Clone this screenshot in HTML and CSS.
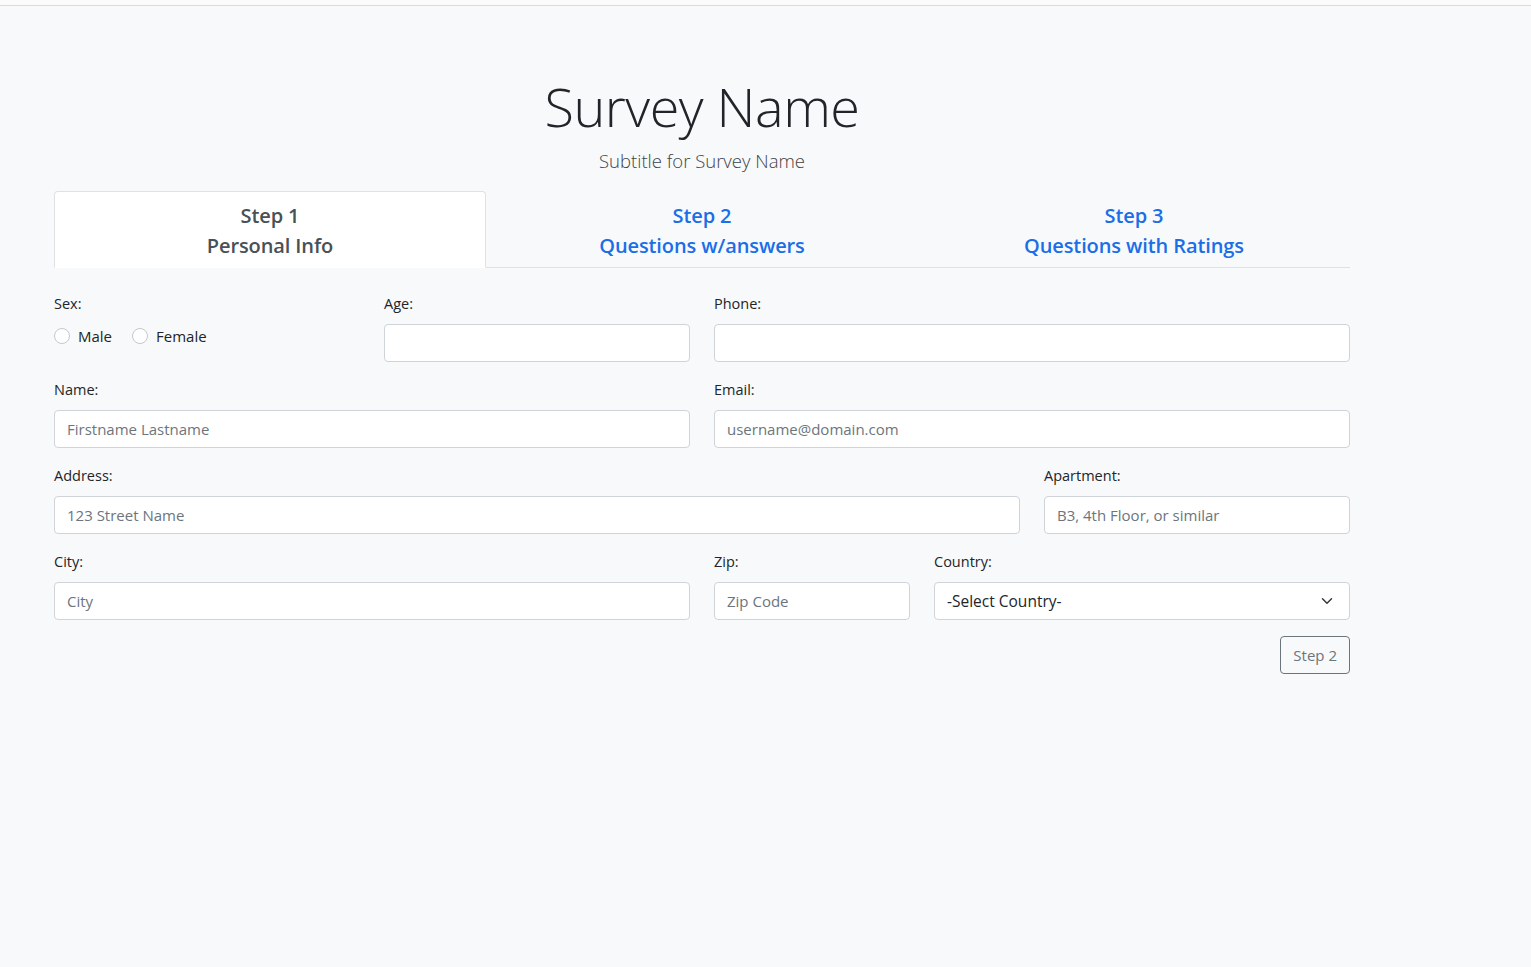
FILE: index.html
```html
<!DOCTYPE html>
<html lang="en">
<head>
<meta charset="utf-8">
<title>Survey Name</title>
<link rel="stylesheet" href="styles.css">
</head>
<body>
<div class="topbar"></div>
<main class="container">
  <header class="hero">
    <h1 class="title">Survey Name</h1>
    <p class="subtitle">Subtitle for Survey Name</p>
  </header>
  <nav class="tabs">
    <a class="tab active"><span>Step 1</span><span>Personal Info</span></a>
    <a class="tab"><span>Step 2</span><span>Questions w/answers</span></a>
    <a class="tab"><span>Step 3</span><span>Questions with Ratings</span></a>
  </nav>
  <form class="form">
    <div class="row">
      <div class="field c3">
        <label class="lbl">Sex:</label>
        <div class="radios">
          <label class="radio"><span class="dot"></span>Male</label>
          <label class="radio"><span class="dot"></span>Female</label>
        </div>
      </div>
      <div class="field c3">
        <label class="lbl">Age:</label>
        <input class="input" type="text">
      </div>
      <div class="field c6">
        <label class="lbl">Phone:</label>
        <input class="input" type="text">
      </div>
    </div>
    <div class="row">
      <div class="field c6">
        <label class="lbl">Name:</label>
        <input class="input" type="text" placeholder="Firstname Lastname">
      </div>
      <div class="field c6">
        <label class="lbl">Email:</label>
        <input class="input" type="text" placeholder="username@domain.com">
      </div>
    </div>
    <div class="row">
      <div class="field c9">
        <label class="lbl">Address:</label>
        <input class="input" type="text" placeholder="123 Street Name">
      </div>
      <div class="field c3">
        <label class="lbl">Apartment:</label>
        <input class="input" type="text" placeholder="B3, 4th Floor, or similar">
      </div>
    </div>
    <div class="row">
      <div class="field c6">
        <label class="lbl">City:</label>
        <input class="input" type="text" placeholder="City">
      </div>
      <div class="field c2">
        <label class="lbl">Zip:</label>
        <input class="input" type="text" placeholder="Zip Code">
      </div>
      <div class="field c4">
        <label class="lbl">Country:</label>
        <div class="select">
          <span>-Select Country-</span>
          <svg width="16" height="12" viewBox="0 0 16 16" class="chev"><path d="m2 5 6 6 6-6" fill="none" stroke="#343a40" stroke-width="2" stroke-linecap="round" stroke-linejoin="round"/></svg>
        </div>
      </div>
    </div>
    <div class="actions">
      <button type="button" class="btn">Step 2</button>
    </div>
  </form>
</main>
</body>
</html>
```

FILE: styles.css
```css
* { box-sizing: border-box; }
html, body { margin: 0; padding: 0; }
body {
  background: #f8f9fa;
  font-family: "Open Sans", "Noto Sans", sans-serif;
  color: #212529;
  font-size: 15px;
  line-height: 1.5;
  min-height: 967px;
}
.topbar {
  height: 6px;
  background: #fbfbfc;
  border-bottom: 1px solid #d8dadd;
}
.container {
  width: 1296px;
  margin-left: 54px;
}
.hero {
  text-align: center;
  padding-top: 67px;
}
.title {
  margin: 0;
  font-size: 54px;
  font-weight: 300;
  line-height: 66px;
  color: #212529;
  letter-spacing: -0.5px;
}
.subtitle {
  margin: 9px 0 0;
  font-size: 18.5px;
  font-weight: 300;
  line-height: 26px;
  color: #3f4448;
}
.tabs {
  margin-top: 17px;
  display: flex;
  border-bottom: 1px solid #dee2e6;
}
.tab {
  flex: 1 1 0;
  display: flex;
  flex-direction: column;
  align-items: center;
  padding: 9px 16px 6px;
  margin-bottom: -1px;
  border: 1px solid transparent;
  border-top-left-radius: 4px;
  border-top-right-radius: 4px;
  color: #1a6ee8;
  font-size: 20px;
  font-weight: 600;
  line-height: 30px;
  text-decoration: none;
  letter-spacing: -0.1px;
}
.tab.active {
  background: #fff;
  color: #495057;
  border-color: #dee2e6 #dee2e6 #fff;
}
.form { padding-top: 24px; }
.row {
  display: flex;
  gap: 24px;
  margin-bottom: 16px;
}
.field { display: flex; flex-direction: column; }
.c2 { width: 196px; }
.c3 { width: 306px; }
.c4 { width: 416px; }
.c6 { width: 636px; }
.c9 { width: 966px; }
.lbl {
  font-size: 14.5px;
  line-height: 24px;
  margin-bottom: 8px;
  color: #212529;
}
.input, .select {
  height: 38px;
  border: 1px solid #ced4da;
  border-radius: 4px;
  background: #fff;
  padding: 6px 12px;
  font-family: inherit;
  font-size: 15px;
  color: #212529;
  width: 100%;
}
.input::placeholder { color: #6c757d; opacity: 1; }
.select {
  display: flex;
  align-items: center;
  justify-content: space-between;
  font-size: 15.5px;
}
.select span { padding-top: 1px; }
.chev { margin-right: 2px; }
.radios {
  display: flex;
  gap: 20px;
  height: 24px;
}
.radio {
  display: flex;
  align-items: center;
  gap: 8px;
  font-size: 15px;
  color: #212529;
}
.dot {
  width: 16px;
  height: 16px;
  border-radius: 50%;
  border: 1px solid #c4c8cc;
  background: #fff;
}
.actions {
  display: flex;
  justify-content: flex-end;
}
.btn {
  height: 38px;
  padding: 6px 12px;
  border: 1px solid #6c757d;
  border-radius: 4px;
  background: transparent;
  color: #6c757d;
  font-family: inherit;
  font-size: 15px;
}
```
